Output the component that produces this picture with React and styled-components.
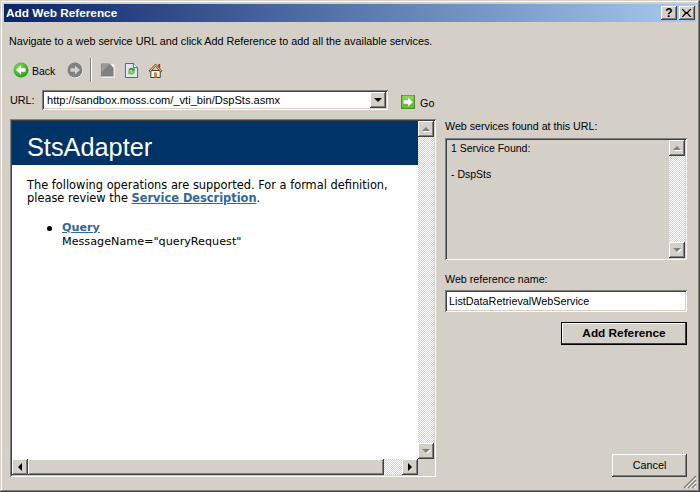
import React from 'react';
import styled, { createGlobalStyle, css } from 'styled-components';

const face = '#d4d0c8';
const raised = css`
  background: ${face};
  box-shadow: inset -1px -1px #404040, inset 1px 1px #fff, inset -2px -2px #808080, inset 2px 2px ${face};
`;
const sunken = css`
  box-shadow: inset 1px 1px #808080, inset -1px -1px #fff, inset 2px 2px #404040, inset -2px -2px ${face};
`;
const hatch = css`
  background: repeating-conic-gradient(#fff 0 25%, ${face} 0 50%) 0 0 / 2px 2px;
`;

const GlobalStyle = createGlobalStyle`
  html, body {
    margin: 0;
    padding: 0;
    background: ${face};
  }
  * {
    box-sizing: border-box;
  }
`;

const Dialog = styled.div`
  position: relative;
  width: 700px;
  height: 492px;
  padding: 4px;
  display: flex;
  flex-direction: column;
  overflow: hidden;
  background: ${face};
  color: #000;
  font-family: 'Liberation Sans', Arial, sans-serif;
  font-size: 10.8px;
  box-shadow: inset -1px -1px #404040, inset 1px 1px ${face}, inset -2px -2px #808080, inset 2px 2px #fff;
`;

const TitleBar = styled.div`
  height: 18px;
  flex: none;
  display: flex;
  align-items: center;
  padding: 0 1px 0 2px;
  background: linear-gradient(90deg, #0a246a, #a6caf0);
  color: #fff;
  font-weight: bold;
  font-size: 11.8px;
`;

const TitleText = styled.span`
  flex: 1;
`;

const CaptionButton = styled.div`
  ${raised}
  width: 16px;
  height: 14px;
  margin-left: 2px;
  display: flex;
  align-items: center;
  justify-content: center;
  color: #000;
  font-size: 12px;
  line-height: 14px;
`;

const Body = styled.div`
  flex: 1;
  min-height: 0;
  display: flex;
  flex-direction: column;
  padding: 0 9px 11px 6px;
`;

const Instruction = styled.div`
  margin: 10px 0 0 -1px;
  height: 18px;
  line-height: 18px;
`;

const Toolbar = styled.div`
  margin: 8px 0 0 3px;
  height: 24px;
  display: flex;
  align-items: center;
`;

const ToolLabel = styled.span`
  width: 23px;
  margin: 0 12px 0 3px;
  padding-top: 1px;
  font-size: 10.5px;
`;

const ToolIcon = styled.svg`
  width: ${(p) => p.$size || 16}px;
  height: ${(p) => p.$size || 16}px;
  flex: none;
  margin-right: ${(p) => p.$gap || 0}px;
`;

const Separator = styled.div`
  width: 2px;
  height: 24px;
  margin: 0 8px 0 7px;
  background: linear-gradient(90deg, #808080 50%, #fff 50%);
`;

const UrlRow = styled.div`
  margin-top: 8px;
  height: 20px;
  display: flex;
  align-items: center;
`;

const UrlLabel = styled.span`
  width: 32px;
`;

const Combo = styled.div`
  ${sunken}
  width: 346px;
  height: 20px;
  background: #fff;
  display: flex;
  align-items: center;
  justify-content: space-between;
  padding: 2px 2px 2px 5px;
  font-size: 11.1px;
`;

const ComboArrow = styled.div`
  ${raised}
  width: 16px;
  height: 16px;
  display: flex;
  align-items: center;
  justify-content: center;
`;

const GoLink = styled.div`
  display: flex;
  align-items: center;
  margin: 4px 0 0 13px;
  gap: 5px;
`;

const GoLabel = styled.span`
  padding-top: 1px;
`;

const Main = styled.div`
  flex: 1;
  min-height: 0;
  margin-top: 9px;
  display: flex;
  gap: 9px;
`;

const BrowserPane = styled.div`
  ${sunken}
  width: 426px;
  padding: 2px;
  display: grid;
  grid-template-columns: 1fr 16px;
  grid-template-rows: 1fr 16px;
  background: #fff;
`;

const Page = styled.div`
  background: #fff;
  font-family: 'DejaVu Sans', Verdana, sans-serif;
  font-size: 11.4px;
  line-height: 13px;
  overflow: hidden;
`;

const Banner = styled.div`
  height: 44px;
  padding: 12px 0 0 15px;
  background: #003366;
  color: #fff;
  font-family: 'Liberation Sans', Arial, sans-serif;
  font-size: 25.3px;
  line-height: 29px;
`;

const Intro = styled.p`
  margin: 14px 20px 0 15px;
`;

const PageLink = styled.a`
  color: #336699;
  font-weight: bold;
  text-decoration: underline;
`;

const OperationList = styled.ul`
  margin: 16px 0 0;
  padding: 0 0 0 35px;
  list-style: none;
`;

const OperationItem = styled.li`
  display: flex;
  gap: 10px;
  font-size: 11.2px;
  line-height: 14px;
  &::before {
    content: '';
    flex: none;
    width: 5px;
    height: 5px;
    margin-top: 5px;
    border-radius: 50%;
    background: #000;
  }
`;

const VScroll = styled.div`
  display: flex;
  flex-direction: column;
`;

const HScroll = styled.div`
  display: flex;
  background: ${face};
`;

const Track = styled.div`
  ${hatch}
  flex: 1;
`;

const Thumb = styled.div`
  ${raised}
  flex: none;
  width: ${(p) => p.$width}px;
`;

const ScrollButton = styled.div`
  ${raised}
  width: 16px;
  height: 16px;
  flex: none;
  display: flex;
  align-items: center;
  justify-content: center;
`;

const Corner = styled.div`
  background: ${face};
`;

const Arrow = styled.div`
  width: 0;
  height: 0;
  border-style: solid;
  border-color: transparent;
  ${(p) => p.$dir === 'up' && css`
    border-width: 0 4px 4px;
    border-bottom-color: ${p.$off ? '#808080' : '#000'};
  `}
  ${(p) => p.$dir === 'down' && css`
    border-width: 4px 4px 0;
    border-top-color: ${p.$off ? '#808080' : '#000'};
  `}
  ${(p) => p.$dir === 'left' && css`
    border-width: 4px 4px 4px 0;
    border-right-color: #000;
  `}
  ${(p) => p.$dir === 'right' && css`
    border-width: 4px 0 4px 4px;
    border-left-color: #000;
  `}
  ${(p) => p.$off && css`
    filter: drop-shadow(1px 1px 0 #fff);
  `}
`;

const SidePanel = styled.div`
  flex: 1;
  min-width: 0;
  display: flex;
  flex-direction: column;
`;

const FieldLabel = styled.div`
  height: 14px;
  line-height: 14px;
  font-size: 10.7px;
  margin-top: ${(p) => p.$top || 0}px;
`;

const ServicesBox = styled.div`
  ${sunken}
  margin-top: 5px;
  height: 122px;
  padding: 2px;
  display: flex;
  background: ${face};
`;

const ServicesText = styled.div`
  flex: 1;
  padding: 2px 4px;
  line-height: 13px;
  font-size: 10.5px;
`;

const ServiceLine = styled.div`
  margin-bottom: 13px;
`;

const NameInput = styled.div`
  ${sunken}
  margin-top: 4px;
  height: 22px;
  padding: 0 4px 1px;
  display: flex;
  align-items: center;
  background: #fff;
`;

const Button = styled.div`
  ${raised}
  align-self: flex-end;
  height: 23px;
  padding-bottom: 1px;
  display: flex;
  align-items: center;
  justify-content: center;
  width: ${(p) => p.$width}px;
`;

const DefaultButton = styled(Button)`
  margin-top: 10px;
  font-weight: bold;
  font-size: 11.8px;
  outline: 1px solid #000;
  outline-offset: -1px;
  box-shadow: inset -2px -2px #404040, inset 2px 2px #fff;
`;

const CancelButton = styled(Button)`
  margin-top: auto;
`;

const Grip = styled.svg`
  position: absolute;
  right: 3px;
  bottom: 3px;
  width: 14px;
  height: 14px;
`;

const BackIcon = () => (
  <ToolIcon viewBox="0 0 16 16">
    <defs>
      <radialGradient id="greenBall" cx="40%" cy="35%" r="70%">
        <stop offset="0%" stopColor="#8fe05a" />
        <stop offset="100%" stopColor="#1f9a1c" />
      </radialGradient>
    </defs>
    <circle cx="8" cy="8" r="7.5" fill="url(#greenBall)" />
    <path d="M3 8l5-4.5V6.3h4.5v3.4H8v2.8z" fill="#fff" />
  </ToolIcon>
);

const ForwardIcon = () => (
  <ToolIcon viewBox="0 0 16 16">
    <circle cx="8.5" cy="8.5" r="7.5" fill="#fff" />
    <circle cx="8" cy="8" r="7.5" fill="#808080" />
    <path d="M13 8L8 3.5V6.3H3.5v3.4H8v2.8z" fill="#d4d0c8" />
  </ToolIcon>
);

const StopIcon = () => (
  <ToolIcon viewBox="0 0 15 16" $size={15} $gap={9}>
    <path d="M1 15.5V1.5h14v14z" fill="#fff" />
    <path d="M0.5 14.5V0.5h9l4.5 4.5v9.5z" fill="#808080" />
    <path d="M1 1h9l-9 9z" fill="#9a9a9a" />
  </ToolIcon>
);

const RefreshIcon = () => (
  <ToolIcon viewBox="0 0 14 16" $size={15} $gap={9}>
    <path d="M0.5 0.5h8.5l4.5 4.5v10.5H0.5z" fill="#dfeaf6" stroke="#3a5f99" />
    <path d="M9 0.5v4.5h4.5" fill="#fff" stroke="#3a5f99" />
    <path d="M3.5 8a3.3 3.3 0 0 1 5.6-2L10.5 5v4h-4l1.2-1.2a1.8 1.8 0 0 0-2.7.4z" fill="#3aa02c" />
    <path d="M10.5 9.5a3.3 3.3 0 0 1-5.6 2L3.5 12.5v-4h4l-1.2 1.2a1.8 1.8 0 0 0 2.7-.4z" fill="#7cc23a" />
  </ToolIcon>
);

const HomeIcon = () => (
  <ToolIcon viewBox="0 0 15 16" $size={15}>
    <path d="M10.5 1h2v4h-2z" fill="#a83a22" />
    <path d="M2.5 8v7.5h10V8z" fill="#fffdf0" stroke="#1f2f50" />
    <path d="M0.5 8.5L7.5 1l7 7.5-1.5 1-5.5-6-5.5 6z" fill="#f0c060" stroke="#4a3a20" strokeWidth="0.8" />
    <path d="M6 10h3v5.5H6z" fill="#d8801e" />
  </ToolIcon>
);

const GoIcon = () => (
  <ToolIcon viewBox="0 0 14 14" $size={14}>
    <rect x="0.5" y="0.5" width="13" height="13" fill="#6dbb3c" stroke="#4d8f2a" />
    <path d="M2 0.5h11v4H1z" fill="#9ad86a" opacity="0.7" />
    <path d="M12 7L7 2.5v2.8H2.5v3.4H7v2.8z" fill="#fff" />
  </ToolIcon>
);

const VerticalBar = () => (
  <VScroll>
    <ScrollButton><Arrow $dir="up" $off /></ScrollButton>
    <Track />
    <ScrollButton><Arrow $dir="down" $off /></ScrollButton>
  </VScroll>
);

const App = () => {
  return (
    <>
      <GlobalStyle />
      <Dialog>
        <TitleBar>
          <TitleText>Add Web Reference</TitleText>
          <CaptionButton>?</CaptionButton>
          <CaptionButton>
            <svg width="10" height="8" viewBox="0 0 10 8">
              <path d="M1 0l3 3h1l3-3h1.5L6 4l3.5 4H8L5 5H4L1 8H-.5L3 4-.5 0z" fill="#000" />
            </svg>
          </CaptionButton>
        </TitleBar>
        <Body>
          <Instruction>
            Navigate to a web service URL and click Add Reference to add all the available services.
          </Instruction>
          <Toolbar>
            <BackIcon />
            <ToolLabel>Back</ToolLabel>
            <ForwardIcon />
            <Separator />
            <StopIcon />
            <RefreshIcon />
            <HomeIcon />
          </Toolbar>
          <UrlRow>
            <UrlLabel>URL:</UrlLabel>
            <Combo>
              http://sandbox.moss.com/_vti_bin/DspSts.asmx
              <ComboArrow><Arrow $dir="down" /></ComboArrow>
            </Combo>
            <GoLink>
              <GoIcon />
              <GoLabel>Go</GoLabel>
            </GoLink>
          </UrlRow>
          <Main>
            <BrowserPane>
              <Page>
                <Banner>StsAdapter</Banner>
                <Intro>
                  The following operations are supported. For a formal definition, please review the{' '}
                  <PageLink>Service Description</PageLink>.
                </Intro>
                <OperationList>
                  <OperationItem>
                    <div>
                      <PageLink>Query</PageLink>
                      <br />
                      MessageName="queryRequest"
                    </div>
                  </OperationItem>
                </OperationList>
              </Page>
              <VerticalBar />
              <HScroll>
                <ScrollButton><Arrow $dir="left" /></ScrollButton>
                <Thumb $width={356} />
                <Track />
                <ScrollButton><Arrow $dir="right" /></ScrollButton>
              </HScroll>
              <Corner />
            </BrowserPane>
            <SidePanel>
              <FieldLabel>Web services found at this URL:</FieldLabel>
              <ServicesBox>
                <ServicesText>
                  <ServiceLine>1 Service Found:</ServiceLine>
                  <ServiceLine>- DspSts</ServiceLine>
                </ServicesText>
                <VerticalBar />
              </ServicesBox>
              <FieldLabel $top={12}>Web reference name:</FieldLabel>
              <NameInput>ListDataRetrievalWebService</NameInput>
              <DefaultButton $width={126}>Add Reference</DefaultButton>
              <CancelButton $width={75}>Cancel</CancelButton>
            </SidePanel>
          </Main>
        </Body>
        <Grip viewBox="0 0 14 14">
          <path d="M13 1L1 13M13 5L5 13M13 9L9 13" stroke="#808080" strokeWidth="1.4" />
          <path d="M13 3L3 13M13 7L7 13M13 11L11 13" stroke="#fff" strokeWidth="1" />
        </Grip>
      </Dialog>
    </>
  );
};

export default App;
